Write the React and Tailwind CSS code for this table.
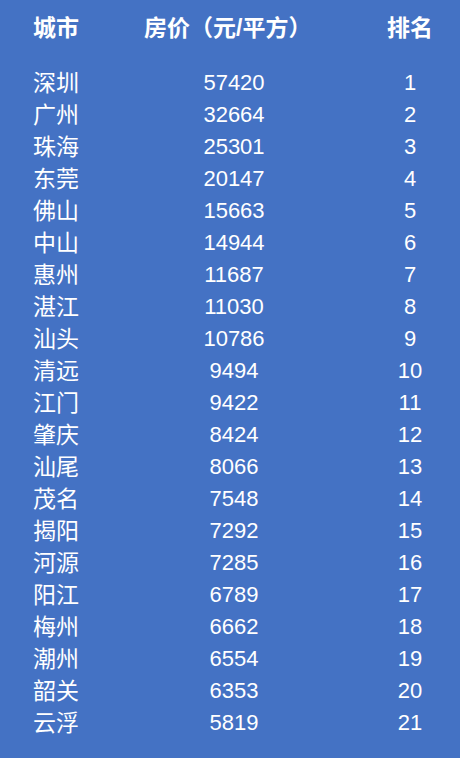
import React from "react";

const rows = [
  ["深圳", 57420],
  ["广州", 32664],
  ["珠海", 25301],
  ["东莞", 20147],
  ["佛山", 15663],
  ["中山", 14944],
  ["惠州", 11687],
  ["湛江", 11030],
  ["汕头", 10786],
  ["清远", 9494],
  ["江门", 9422],
  ["肇庆", 8424],
  ["汕尾", 8066],
  ["茂名", 7548],
  ["揭阳", 7292],
  ["河源", 7285],
  ["阳江", 6789],
  ["梅州", 6662],
  ["潮州", 6554],
  ["韶关", 6353],
  ["云浮", 5819],
];

export default function App() {
  return (
    <div
      className="w-[460px] h-[758px] bg-[#4472c4] pl-[33px] pt-[12px] text-white"
      style={{ fontFamily: '"Liberation Sans", "Noto Sans CJK SC", sans-serif' }}
    >
      {/* header */}
      <div className="flex items-center h-[32px] leading-[32px] font-bold text-[23px]">
        <div className="w-[111px]">城市</div>
        <div className="w-[180px] text-left">房价（元/平方）</div>
        <div className="ml-[46px] w-[80px] text-center">排名</div>
      </div>

      <div className="mt-[23px]">
        {rows.map(([city, price], i) => (
          <div
            key={city}
            className="flex items-center h-[32px] leading-[32px] text-[22px]"
          >
            <div className="w-[111px] text-[23px]">{city}</div>
            <div className="w-[180px] text-center">{price}</div>
            <div className="ml-[46px] w-[80px] text-center">{i + 1}</div>
          </div>
        ))}
      </div>
    </div>
  );
}
